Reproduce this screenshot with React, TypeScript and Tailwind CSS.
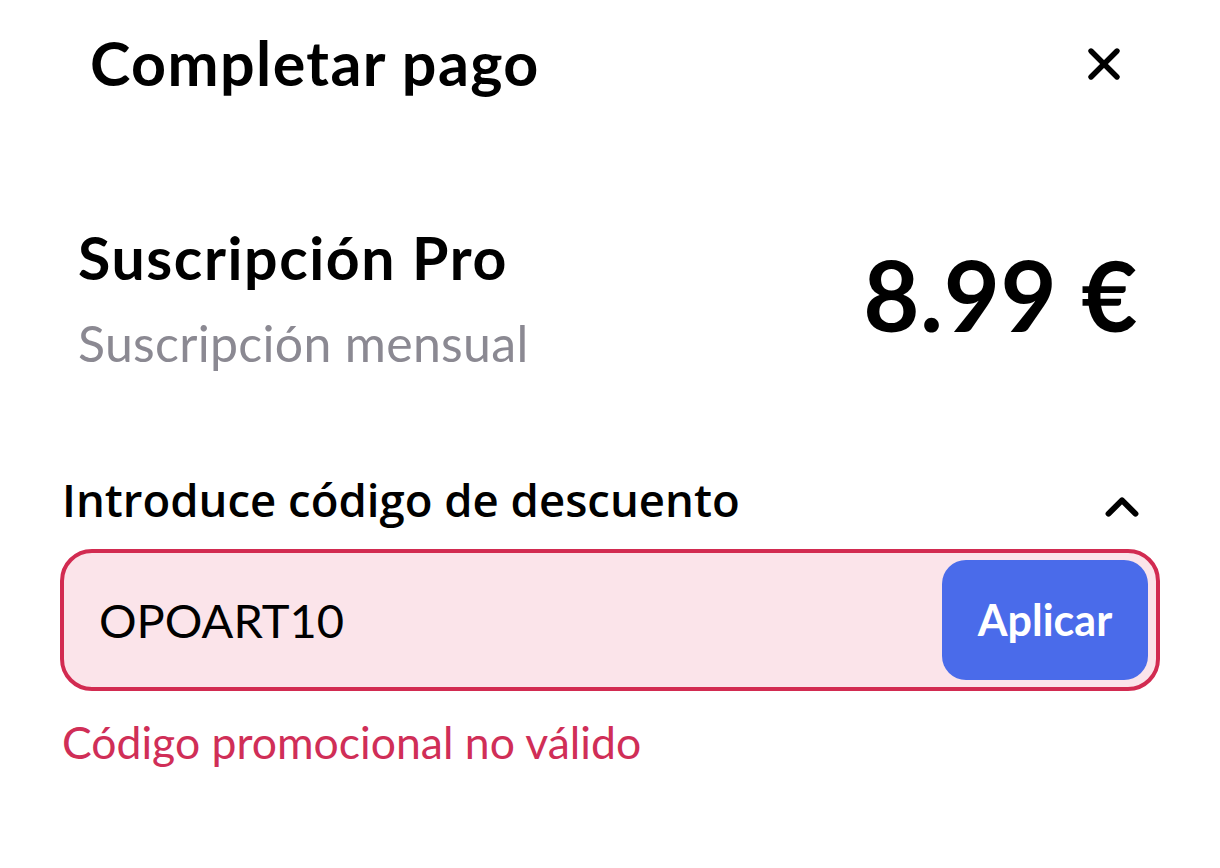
import { X, ChevronUp } from "lucide-react";

const App = () => {
  return (
    <div className="w-[1220px] h-[868px] bg-white overflow-hidden font-['Lato',sans-serif] text-black">
      <div className="flex flex-row items-center justify-between pl-[90px] pr-[90px] pt-[36px] h-[88px]">
        <h1 className="text-[61px] leading-none font-bold tracking-[1.4px]">Completar pago</h1>
        <X className="w-[52px] h-[52px] mt-[4px]" strokeWidth={2.5} />
      </div>

      <div className="flex flex-row items-center justify-between pl-[78px] pr-[82px] mt-[140px]">
        <div className="flex flex-col">
          <span className="text-[59px] leading-none font-bold tracking-[1.6px]">Suscripción Pro</span>
          <span className="text-[50px] leading-none text-[#8b8992] mt-[31px] tracking-[0.3px]">
            Suscripción mensual
          </span>
        </div>
        <span className="text-[97px] leading-none font-bold mt-[-8px] tracking-[0.5px]">8.99 €</span>
      </div>

      <div className="flex flex-row items-center justify-between pl-[62px] pr-[71px] mt-[105px]">
        <span className="text-[45.5px] leading-none font-semibold font-['Open_Sans',sans-serif]">
          Introduce código de descuento
        </span>
        <ChevronUp className="w-[54px] h-[54px] mt-[7px] -mb-[7px]" strokeWidth={2.6} />
      </div>

      <div className="mx-[60px] mt-[22px] h-[142px] rounded-[32px] border-[4px] border-[#d22b51] bg-[#fbe4ea] flex flex-row items-center justify-between pl-[35px] pr-[8px]">
        <span className="text-[47px] leading-none">OPOART10</span>
        <button className="w-[206px] h-[120px] rounded-[24px] bg-[#4a6bea] text-white text-[43px] font-bold">
          Aplicar
        </button>
      </div>

      <p className="mx-[62px] mt-[29px] text-[44.5px] leading-none text-[#d02e57]">Código promocional no válido</p>
    </div>
  );
};

export default App;
